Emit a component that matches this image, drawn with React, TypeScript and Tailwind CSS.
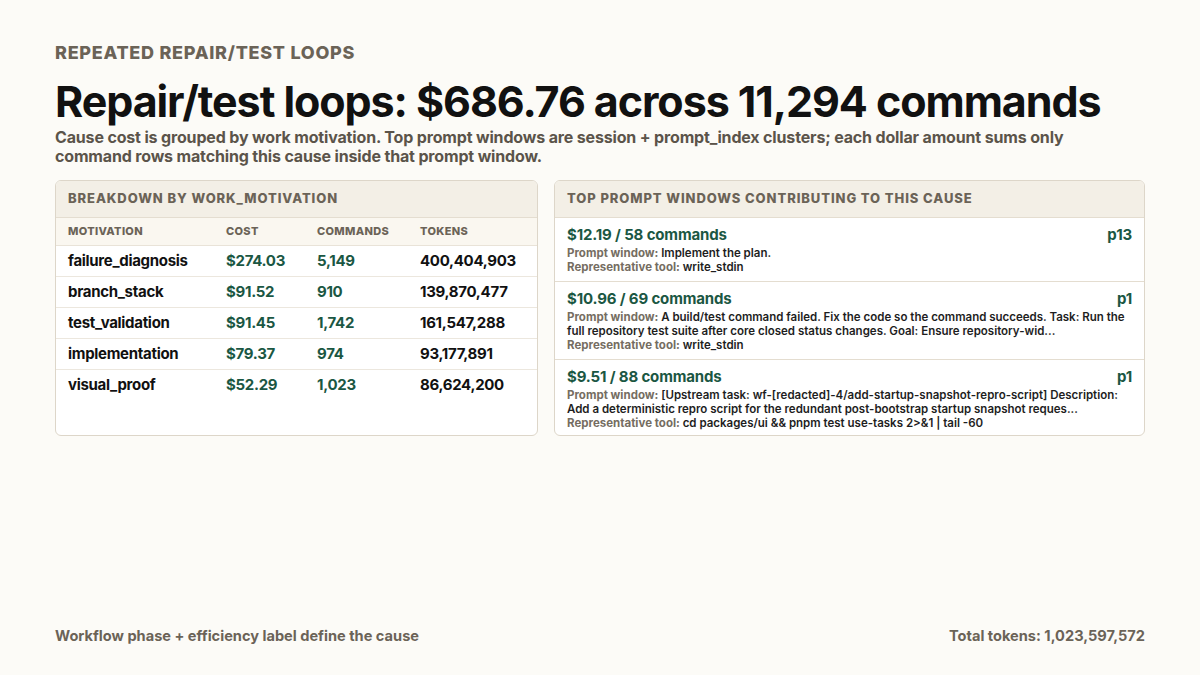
import React from "react"

const rows = [
    { motivation: "failure_diagnosis", cost: "$274.03", commands: "5,149", tokens: "400,404,903" },
    { motivation: "branch_stack", cost: "$91.52", commands: "910", tokens: "139,870,477" },
    { motivation: "test_validation", cost: "$91.45", commands: "1,742", tokens: "161,547,288" },
    { motivation: "implementation", cost: "$79.37", commands: "974", tokens: "93,177,891" },
    { motivation: "visual_proof", cost: "$52.29", commands: "1,023", tokens: "86,624,200" },
]

const windows = [
    {
        title: "$12.19 / 58 commands",
        prompt: "p13",
        text: "Implement the plan.",
        tool: "write_stdin",
    },
    {
        title: "$10.96 / 69 commands",
        prompt: "p1",
        text: "A build/test command failed. Fix the code so the command succeeds. Task: Run the full repository test suite after core closed status changes. Goal: Ensure repository-wid...",
        tool: "write_stdin",
    },
    {
        title: "$9.51 / 88 commands",
        prompt: "p1",
        text: "[Upstream task: wf-[redacted]-4/add-startup-snapshot-repro-script] Description: Add a deterministic repro script for the redundant post-bootstrap startup snapshot reques...",
        tool: "cd packages/ui && pnpm test use-tasks 2>&1 | tail -60",
    },
]

const CardHeader = ({ children }: { children: React.ReactNode }) => (
    <div className="h-[37px] shrink-0 flex items-center px-3 bg-[#f3efe6] border-b border-[#e4ddd0] text-[13px] font-extrabold uppercase tracking-[0.07em] text-[#6b6357]">
        {children}
    </div>
)

export default function App() {
    return (
        <div
            className="h-[675px] w-[1200px] bg-[#fcfbf7] px-[55px] pt-[42px] pb-[27px] flex flex-col text-[#111111]"
            style={{ fontFamily: "Inter, 'Noto Sans', sans-serif" }}
        >
            <div className="text-[18px] font-extrabold uppercase tracking-[0.04em] text-[#6b6357] leading-[22px]">
                Repeated repair/test loops
            </div>
            <h1 className="mt-[13px] text-[43px] font-bold leading-[48px] tracking-[-0.025em] whitespace-nowrap">
                Repair/test loops: $686.76 across 11,294 commands
            </h1>
            <p className="mt-[3px] text-[16px] font-bold leading-[19px] tracking-[-0.01em] text-[#5b544a] w-[1040px]">
                Cause cost is grouped by work motivation. Top prompt windows are session + prompt_index clusters; each dollar amount sums only command rows matching this cause inside that prompt window.
            </p>

            <div className="mt-[14px] flex gap-4 items-stretch">
                <div className="w-[483px] h-[256px] rounded-md border border-[#ddd6c9] bg-white overflow-hidden">
                    <CardHeader>Breakdown by work_motivation</CardHeader>
                    <div className="grid grid-cols-[158px_91px_103px_1fr] px-3 h-[28px] items-center bg-[#faf7f0] border-b border-[#e9e3d8] text-[11px] font-extrabold uppercase tracking-[0.03em] text-[#6b6357]">
                        <div>Motivation</div>
                        <div>Cost</div>
                        <div>Commands</div>
                        <div>Tokens</div>
                    </div>
                    {rows.map((r, i) => (
                        <div
                            key={r.motivation}
                            className={`grid grid-cols-[158px_91px_103px_1fr] px-3 h-[31px] items-center text-[15px] font-bold tracking-[-0.02em] ${i < rows.length - 1 ? "border-b border-[#ece7de]" : ""}`}
                        >
                            <div>{r.motivation}</div>
                            <div className="text-[#1b5743]">{r.cost}</div>
                            <div className="text-[#1b5743]">{r.commands}</div>
                            <div>{r.tokens}</div>
                        </div>
                    ))}
                </div>

                <div className="flex-1 h-[256px] rounded-md border border-[#ddd6c9] bg-white overflow-hidden flex flex-col">
                    <CardHeader>Top prompt windows contributing to this cause</CardHeader>
                    {windows.map((w, i) => (
                        <div
                            key={w.title}
                            className={`px-3 pt-[7px] pb-[7px] ${i < windows.length - 1 ? "border-b border-[#e4ddd0]" : ""}`}
                        >
                            <div className="flex justify-between items-center text-[15px] font-bold tracking-[-0.01em] text-[#1b5743] leading-[19px]">
                                <span>{w.title}</span>
                                <span>{w.prompt}</span>
                            </div>
                            <div className="mt-[2px] text-[11.5px] leading-[14px] font-semibold text-[#1e1e1e]">
                                <span className="font-bold text-[#756d62]">Prompt window: </span>
                                {w.text}
                            </div>
                            <div className="text-[11.5px] leading-[14px] font-semibold text-[#1e1e1e]">
                                <span className="font-bold text-[#756d62]">Representative tool: </span>
                                {w.tool}
                            </div>
                        </div>
                    ))}
                </div>
            </div>

            <div className="mt-auto flex justify-between text-[14.6px] font-bold text-[#6b6357]">
                <span>Workflow phase + efficiency label define the cause</span>
                <span>Total tokens: 1,023,597,572</span>
            </div>
        </div>
    )
}
